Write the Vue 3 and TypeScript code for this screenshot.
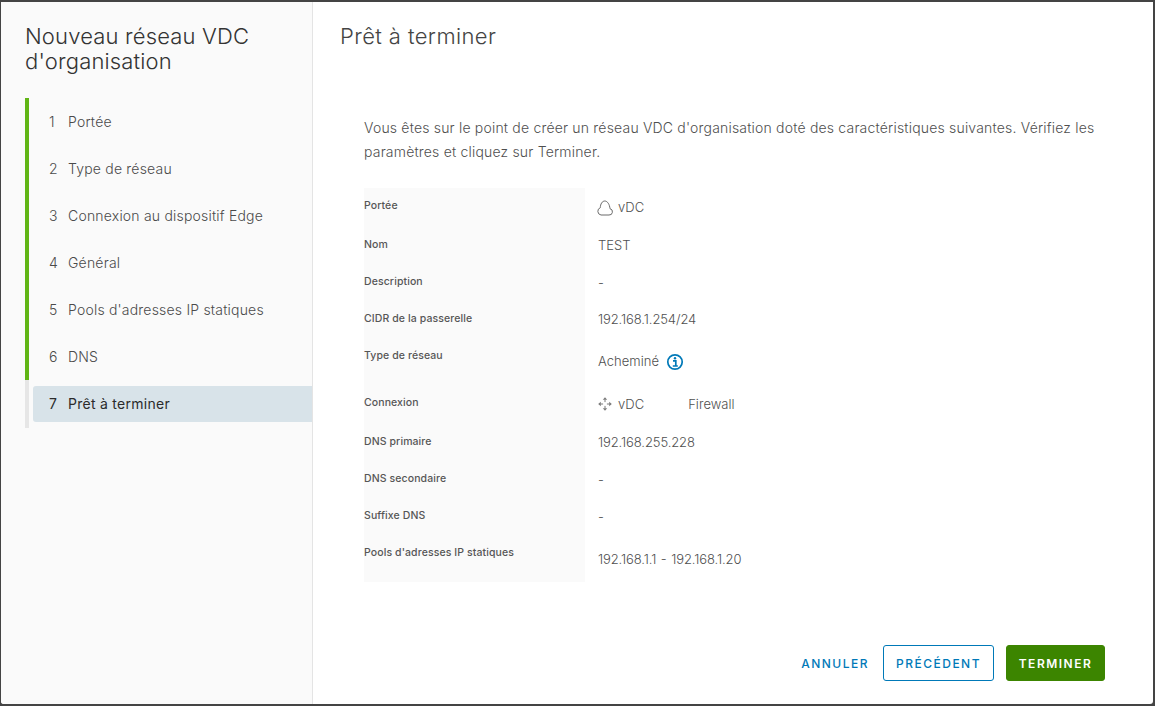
<script setup lang="ts">
const steps: string[] = [
  'Portée',
  'Type de réseau',
  'Connexion au dispositif Edge',
  'Général',
  "Pools d'adresses IP statiques",
  'DNS',
  'Prêt à terminer',
]
</script>

<template>
  <div class="frame">
    <div class="modal">
      <aside class="side">
        <h1 class="side-title">Nouveau réseau VDC d'organisation</h1>
        <ol class="steps">
          <li v-for="(s, i) in steps" :key="s" class="step" :class="{ current: i === 6 }">
            <div class="step-inner">
              <span class="num">{{ i + 1 }}</span>
              <span>{{ s }}</span>
            </div>
          </li>
        </ol>
      </aside>
      <main class="main">
        <h2 class="main-title">Prêt à terminer</h2>
        <p class="intro">Vous êtes sur le point de créer un réseau VDC d'organisation doté des caractéristiques suivantes. Vérifiez les paramètres et cliquez sur Terminer.</p>
        <div class="table">
          <div class="row r39">
            <div class="label">Portée</div>
            <div class="value">
              <svg class="ico" width="16" height="18" viewBox="0 0 16 18" fill="none" stroke="#6b6b6b" stroke-width="1">
                <path d="M4 17h8a3.2 3.2 0 0 0 1-6.3C12.6 6.5 10.5 3 7.8 3 5.2 3 3.4 6 3.3 9.7A3.8 3.8 0 0 0 4 17z" />
              </svg>
              <span>vDC</span>
            </div>
          </div>
          <div class="row"><div class="label">Nom</div><div class="value">TEST</div></div>
          <div class="row"><div class="label">Description</div><div class="value dash">-</div></div>
          <div class="row"><div class="label">CIDR de la passerelle</div><div class="value ip">192.168.1.254/24</div></div>
          <div class="row r47">
            <div class="label">Type de réseau</div>
            <div class="value">
              <span>Acheminé</span>
              <svg class="info" width="18" height="18" viewBox="0 0 18 18" fill="none">
                <circle cx="9" cy="9" r="7.2" stroke="#0079b8" stroke-width="1.7" />
                <circle cx="9" cy="5.3" r="1.2" fill="#0079b8" />
                <path d="M7 7.9h2.8v5M6.8 13h5" stroke="#0079b8" stroke-width="1.7" />
              </svg>
            </div>
          </div>
          <div class="row r39">
            <div class="label">Connexion</div>
            <div class="value">
              <svg class="ico" width="16" height="16" viewBox="0 0 16 16" fill="none" stroke="#7a7a7a" stroke-width="1">
                <path d="M8 3.5v2.6M8 9.9v2.6M3.5 8h2.6M9.9 8h2.6" />
                <path d="M5.8 3.8 8 1.2l2.2 2.6zM5.8 12.2 8 14.8l2.2-2.6zM3.8 5.8 1.2 8l2.6 2.2zM12.2 5.8 14.8 8l-2.6 2.2z" fill="#7a7a7a" stroke="none" />
              </svg>
              <span>vDC</span>
              <span class="fw">Firewall</span>
            </div>
          </div>
          <div class="row"><div class="label">DNS primaire</div><div class="value ip">192.168.255.228</div></div>
          <div class="row"><div class="label">DNS secondaire</div><div class="value dash">-</div></div>
          <div class="row"><div class="label">Suffixe DNS</div><div class="value dash">-</div></div>
          <div class="row r47"><div class="label">Pools d'adresses IP statiques</div><div class="value ip range">192.168.1.1 - 192.168.1.20</div></div>
        </div>
        <footer class="footer">
          <button class="btn link" type="button">ANNULER</button>
          <button class="btn outline" type="button">PRÉCÉDENT</button>
          <button class="btn primary" type="button">TERMINER</button>
        </footer>
      </main>
    </div>
  </div>
</template>

<style>
html, body { margin: 0; padding: 0; background: #444; }
</style>

<style scoped>
.frame {
  width: 1155px;
  height: 706px;
  background: #444;
  box-sizing: border-box;
  padding: 2px 2px 2px 1px;
  font-family: Inter, "Liberation Sans", sans-serif;
  overflow: hidden;
}
.modal {
  display: flex;
  height: 100%;
  background: #fff;
  border-radius: 0 0 3px 3px;
  overflow: hidden;
}
.side {
  width: 312px;
  flex: none;
  box-sizing: border-box;
  background: #fafafa;
  border-right: 1px solid #e4e4e4;
  padding: 22px 0 0 24px;
}
.side-title {
  margin: 0;
  font-size: 22px;
  font-weight: 300;
  line-height: 25px;
  letter-spacing: .17px;
  color: #333;
  width: 260px;
}
.steps {
  list-style: none;
  margin: 24px 0 0;
  padding: 0;
}
.step {
  border-left: 4px solid #60b515;
  padding: 6px 0 5px 4px;
  height: 47px;
  box-sizing: border-box;
}
.step.current {
  border-left-color: #e6e6e6;
  height: 48px;
}
.step-inner {
  display: flex;
  align-items: center;
  height: 36px;
  box-sizing: border-box;
  padding: 0 0 2px 16px;
  font-size: 14px;
  font-weight: 300;
  letter-spacing: .2px;
  color: #4a4a4a;
  border-radius: 3px 0 0 3px;
}
.current .step-inner {
  background: #d8e3e9;
  color: #2b2b2b;
  font-weight: 400;
  letter-spacing: .27px;
}
.num { width: 19px; flex: none; }
.main {
  flex: 1;
  display: flex;
  flex-direction: column;
  padding: 0 48px 23px 27px;
  min-width: 0;
}
.main-title {
  margin: 20px 0 0;
  font-size: 22px;
  font-weight: 300;
  line-height: 28px;
  letter-spacing: .4px;
  color: #444;
}
.intro {
  margin: 66px 0 0 24px;
  font-size: 14px;
  font-weight: 300;
  line-height: 24px;
  letter-spacing: .19px;
  color: #4f4f4f;
}
.table {
  margin: 24px 0 0 24px;
  display: flex;
  flex-direction: column;
}
.row {
  display: flex;
  min-height: 37px;
}
.r39 { min-height: 39px; }
.r47 { min-height: 47px; }
.label {
  width: 221px;
  flex: none;
  box-sizing: border-box;
  background: #fafafa;
  padding-top: 12px;
  font-size: 10.5px;
  line-height: 12px;
  font-weight: 500;
  letter-spacing: .1px;
  color: #565656;
}
.value {
  display: flex;
  align-items: center;
  padding: 0 0 1px 13px;
  font-size: 13px;
  font-weight: 300;
  letter-spacing: .03px;
  color: #4f4f4f;
}
.dash { padding-bottom: 0; padding-top: 1px; }
.ip { letter-spacing: -.1px; }
.range { word-spacing: 1px; padding-bottom: 0; }
.ico { margin: 0 5px 0 -1px; }
.info { margin: 2px 0 0 7px; }
.fw { margin-left: 44px; }
.footer {
  margin-top: auto;
  display: flex;
  justify-content: flex-end;
  align-items: center;
  gap: 12px;
}
.btn {
  height: 36px;
  box-sizing: border-box;
  font-family: inherit;
  font-size: 12px;
  font-weight: 500;
  letter-spacing: 1.5px;
  border-radius: 3px;
  padding: 0;
  cursor: pointer;
}
.link { background: none; border: none; color: #0079b8; padding: 0 2px; }
.outline { background: #fff; border: 1px solid #0079b8; color: #0079b8; width: 111px; }
.primary { background: #3c8500; border: 1px solid #3c8500; color: #fff; width: 99px; font-weight: 600; }
</style>
